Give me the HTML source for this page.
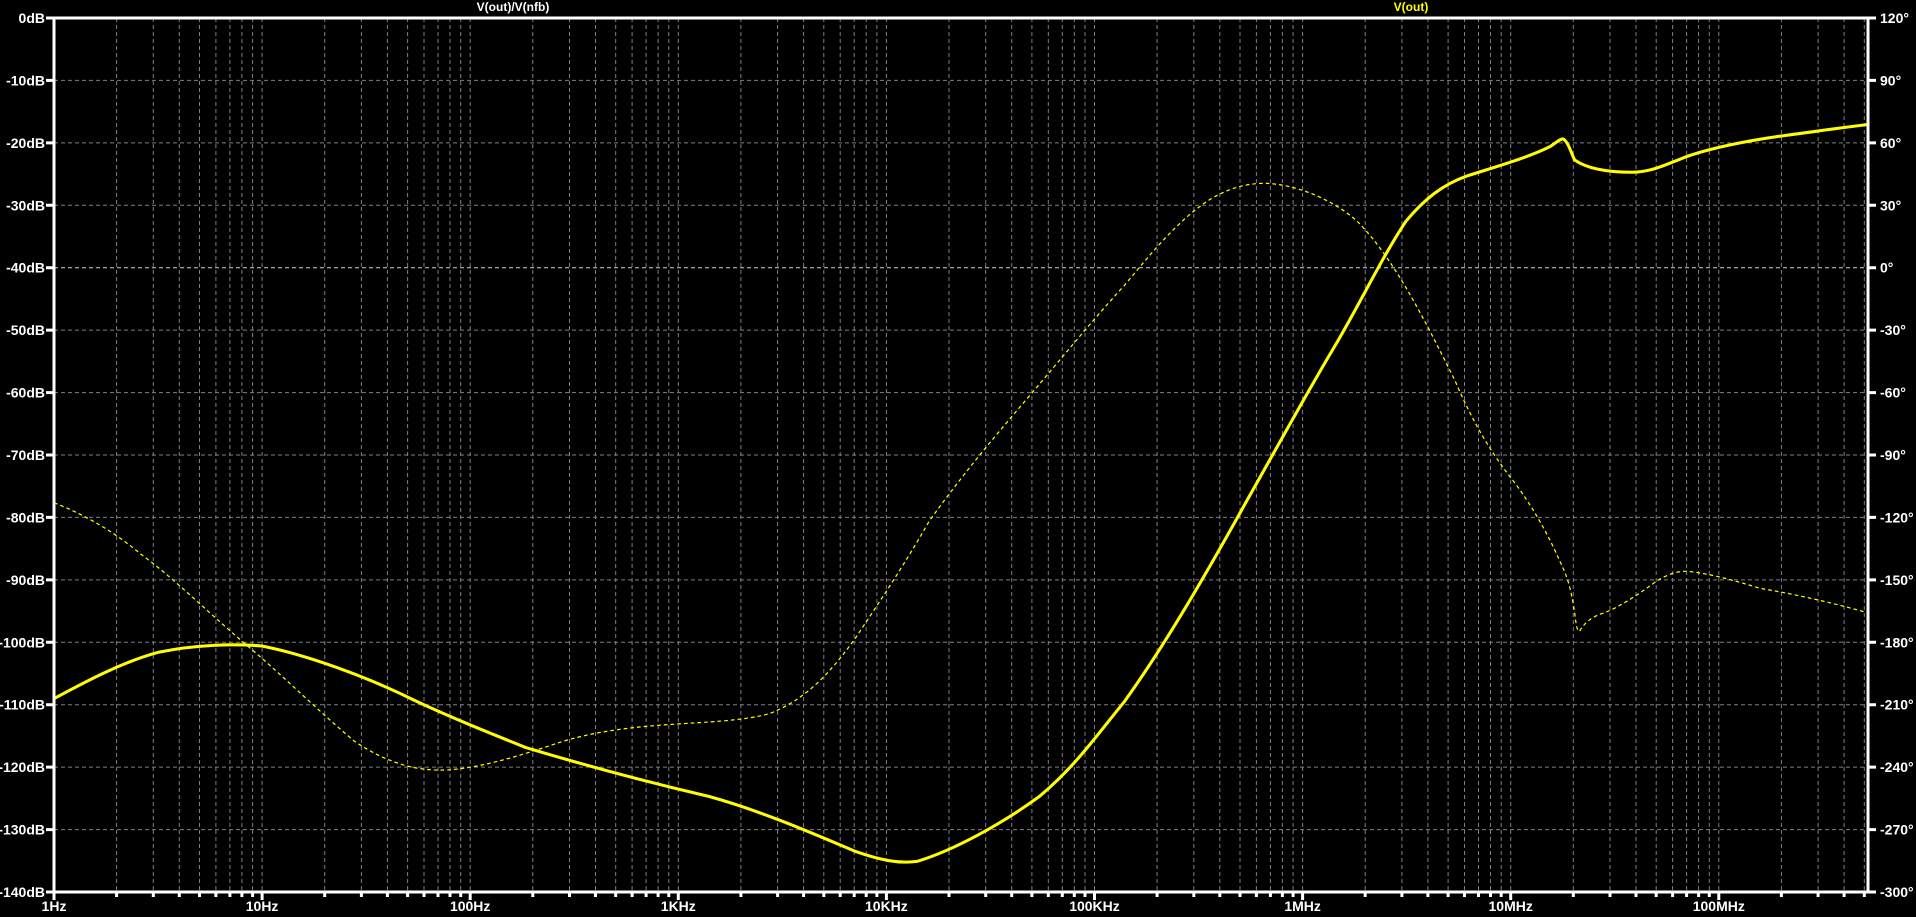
<!DOCTYPE html>
<html><head><meta charset="utf-8"><style>
html,body{margin:0;padding:0;background:#000;width:1916px;height:917px;overflow:hidden}
svg{display:block}
text{font-family:"Liberation Sans",sans-serif;font-weight:bold;fill:#fff;font-size:14px}
</style></head><body>
<svg id="s" width="1916" height="917" xmlns="http://www.w3.org/2000/svg">
<g id="grid"></g>
<g transform="translate(54,18) scale(1.2224,1.2241) translate(-44,-14)" fill="none" stroke="#ffff00">
<path stroke-width="2.5" stroke-linejoin="round" d="M44,570 C70,556 100,540 130,532 C160,526 190,525 214,527 C250,534 300,552 340,572 C370,586 400,598 430,610 C470,622 520,636 580,650 C620,661 660,678 700,695 C720,702 735,705 750,703 C780,694 820,672 850,650 C880,625 897,600 920,572 C950,530 980,480 1020,408 C1050,355 1068,322 1090,285 C1110,252 1130,210 1150,180 C1165,162 1180,150 1200,143 C1225,135 1250,128 1268,119 C1274,115 1277,112 1279,113 C1283,116 1285,124 1288,130 C1298,137 1315,140 1335,140 C1350,140 1362,134 1375,129 C1395,121 1430,114 1460,110 C1490,106 1510,103 1528,101"/>
<path stroke-width="1" stroke-dasharray="3,2.5" d="M44,410 C70,420 95,435 115,452 C140,470 165,495 200,525 C230,550 260,580 290,605 C320,625 345,630 370,628 C400,625 430,615 460,605 C490,596 520,593 550,591 C580,589 610,588 630,582 C655,572 675,555 700,520 C720,490 740,460 760,425 C785,390 810,360 840,325 C870,290 890,265 920,232 C945,202 965,178 990,162 C1005,153 1020,149 1035,149 C1060,150 1090,162 1110,180 C1140,210 1165,260 1190,310 C1205,345 1220,370 1240,395 C1258,420 1268,440 1276,458 C1282,470 1285,480 1288,500 C1289,508 1290,516 1292,515 C1296,508 1302,503 1312,500 C1325,495 1340,485 1355,474 C1365,468 1372,466 1380,466 C1400,468 1420,474 1440,480 C1470,485 1500,492 1528,500"/>
</g>
<g id="frame"></g>
<text x="513" y="11" text-anchor="middle" style="font-size:12px">V(out)/V(nfb)</text>
<text x="1411" y="11" text-anchor="middle" style="font-size:12px;fill:#ffff00">V(out)</text>
</svg>
<script>
var NS="http://www.w3.org/2000/svg",g=document.getElementById('grid'),fr=document.getElementById('frame'),s=document.getElementById('s');
var L=54,R=1868,T=18,B=892,D=208.1,H=(B-T)/14;
function el(p,tag,a,txt){var e=document.createElementNS(NS,tag);for(var k in a)e.setAttribute(k,a[k]);if(txt!=null)e.textContent=txt;p.appendChild(e);return e;}
var dgrid="",dticks="";
for(var k=0;k<9;k++){for(var m=1;m<=9;m++){var x=L+D*k+D*Math.log10(m);if(x>R-1)continue;
 if(!(k==0&&m==1)){dgrid+="M"+x.toFixed(1)+","+T+"V"+B;}
 dticks+="M"+x.toFixed(1)+","+B+"v"+(m==1?8:5);}}
for(var i=1;i<14;i++){if(i==4)continue;var y=T+H*i;dgrid+="M"+L+","+y.toFixed(1)+"H"+R;}
el(g,'path',{d:dgrid,stroke:'#808080','stroke-width':1,'stroke-dasharray':'4,3',fill:'none'});
var y0=T+H*4;el(g,'path',{d:"M"+L+","+y0.toFixed(1)+"H"+R,stroke:'#d0d0d0','stroke-width':1,'stroke-dasharray':'4,3',fill:'none'});
el(fr,'rect',{x:L,y:T,width:R-L,height:B-T,fill:'none',stroke:'#fff','stroke-width':3});
var dt=dticks;
for(var i=0;i<=14;i++){var y=(T+H*i).toFixed(1);dt+="M"+(L-8)+","+y+"h8M"+R+","+y+"h8";}
el(fr,'path',{d:dt,stroke:'#fff','stroke-width':3,fill:'none'});
for(var i=0;i<=14;i++){var y=T+H*i+5;
 el(s,'text',{x:45,y:y,'text-anchor':'end'},(i==0?"0":"-"+(i*10))+"dB");
 var ph=120-30*i;el(s,'text',{x:1880,y:y},ph+"\u00b0");}
var fl=["1Hz","10Hz","100Hz","1KHz","10KHz","100KHz","1MHz","10MHz","100MHz"];
for(var k=0;k<9;k++)el(s,'text',{x:L+D*k,y:911,'text-anchor':'middle'},fl[k]);
</script>
</body></html>
